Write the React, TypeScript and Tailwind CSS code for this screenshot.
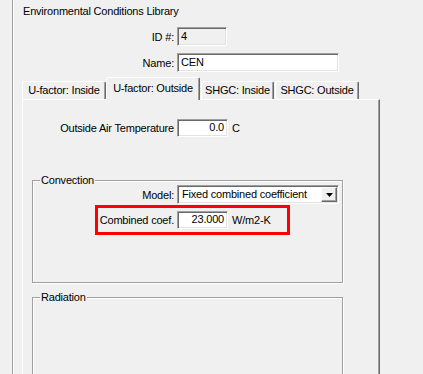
import React from "react";

const sunken =
  "border border-t-[#a0a0a0] border-l-[#a0a0a0] border-b-white border-r-white shadow-[inset_1px_1px_0_#696969,inset_-1px_-1px_0_#e3e3e3]";

function Tab({ label, w, selected, ml }: { label: string; w: string; selected?: boolean; ml?: string }) {
  return (
    <div
      className={`${w} ${ml ?? ""} ${
        selected ? "h-[23px] mb-[-1px] relative z-10 pt-[2px]" : "h-[18px]"
      } bg-[#f0f0f0] border-t border-l border-white border-r border-r-[#696969] shadow-[inset_-1px_0_0_#a0a0a0] rounded-t-[2px] flex items-start justify-center`}
    >
      <span className="leading-[16px] whitespace-nowrap">{label}</span>
    </div>
  );
}

function Group({ label, h, children }: { label: string; h: string; children?: React.ReactNode }) {
  return (
    <div
      className={`relative ml-[9px] w-[311px] ${h} border border-[#a0a0a0] shadow-[inset_1px_1px_0_#fff,1px_1px_0_#fff]`}
    >
      <span className="absolute top-[-8px] left-[7px] px-[1px] bg-[#f0f0f0] leading-[14px] whitespace-nowrap">
        {label}
      </span>
      {children}
    </div>
  );
}

export default function App() {
  return (
    <div className="w-[423px] h-[374px] overflow-hidden bg-[#f0f0f0] text-[11px] text-black font-['Liberation_Sans',Arial,sans-serif] tracking-[-0.2px]">
      <div className="ml-[12px] h-full border-l border-[#a0a0a0] shadow-[inset_1px_0_0_#fff] pl-[9px] pt-[4px]">
        <div className="pl-[1px] h-[14px] leading-[14px] whitespace-nowrap">Environmental Conditions Library</div>

        <div className="mt-[9px] flex items-center">
          <div className="w-[152px] text-right leading-[14px]">ID #:</div>
          <div className={`ml-[3px] w-[50px] h-[19px] bg-[#f0f0f0] ${sunken} pl-[3px] leading-[16px]`}>4</div>
        </div>

        <div className="mt-[7px] flex items-center">
          <div className="w-[152px] text-right leading-[14px]">Name:</div>
          <div className={`ml-[3px] w-[162px] h-[19px] bg-white ${sunken} pl-[3px] leading-[16px]`}>CEN</div>
        </div>

        <div className="mt-[5px] flex items-end h-[22px]">
          <Tab label="U-factor: Inside" w="w-[84px]" />
          <Tab label="U-factor: Outside" w="w-[94px]" selected />
          <Tab label="SHGC: Inside" w="w-[73px]" ml="ml-[1px]" />
          <Tab label="SHGC: Outside" w="w-[84px]" ml="ml-[1px]" />
        </div>

        <div className="w-[358px] h-[300px] border-t border-l border-white border-r border-r-[#696969] shadow-[inset_-1px_0_0_#a0a0a0]">
          <div className="mt-[19px] flex items-center">
            <div className="w-[151px] text-right leading-[14px] whitespace-nowrap">Outside Air Temperature</div>
            <div className={`ml-[3px] w-[51px] h-[18px] bg-white ${sunken} pr-[3px] text-right leading-[15px]`}>0.0</div>
            <div className="ml-[4px] leading-[14px]">C</div>
          </div>

          <div className="mt-[43px]">
            <Group label="Convection" h="h-[103px]">
              <div className="mt-[4px] flex items-center">
                <div className="w-[141px] text-right leading-[14px]">Model:</div>
                <div className={`ml-[3px] w-[162px] h-[19px] bg-white ${sunken} flex items-stretch p-[1px]`}>
                  <div className="flex-1 pl-[3px] leading-[15px] whitespace-nowrap overflow-hidden">
                    Fixed combined coefficient
                  </div>
                  <div className="w-[16px] bg-[#f0f0f0] border border-t-white border-l-white border-b-[#696969] border-r-[#696969] shadow-[inset_-1px_-1px_0_#a0a0a0] flex items-center justify-center">
                    <svg width="7" height="4" viewBox="0 0 7 4">
                      <path d="M0 0H7L3.5 4Z" fill="#000" />
                    </svg>
                  </div>
                </div>
              </div>

              <div className="mt-[1px] ml-[62px] w-[195px] h-[30px] border-[3px] border-[#ff0000] flex items-center">
                <div className="w-[76px] text-right leading-[14px] whitespace-nowrap">Combined coef.</div>
                <div className={`ml-[3px] w-[51px] h-[18px] bg-white ${sunken} pr-[3px] text-right leading-[15px]`}>23.000</div>
                <div className="ml-[4px] leading-[14px] whitespace-nowrap">W/m2-K</div>
              </div>
            </Group>
          </div>

          <div className="mt-[14px]">
            <Group label="Radiation" h="h-[200px]" />
          </div>
        </div>
      </div>
    </div>
  );
}
